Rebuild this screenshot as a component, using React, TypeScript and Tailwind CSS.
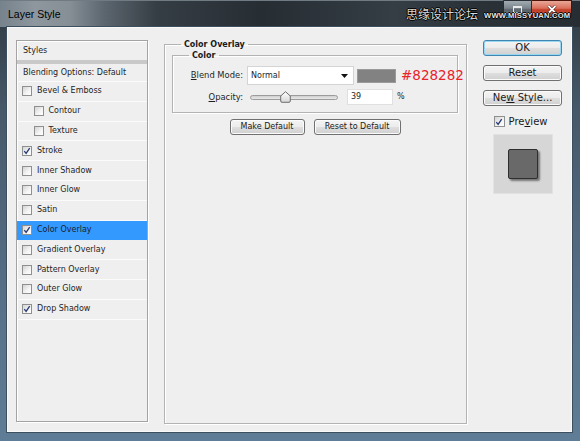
import React from 'react';

type Row = { label: string; checked?: boolean; indent?: boolean; selected?: boolean };

const rows: Row[] = [
  { label: 'Bevel & Emboss' },
  { label: 'Contour', indent: true },
  { label: 'Texture', indent: true },
  { label: 'Stroke', checked: true },
  { label: 'Inner Shadow' },
  { label: 'Inner Glow' },
  { label: 'Satin' },
  { label: 'Color Overlay', checked: true, selected: true },
  { label: 'Gradient Overlay' },
  { label: 'Pattern Overlay' },
  { label: 'Outer Glow' },
  { label: 'Drop Shadow', checked: true },
];

const CheckBox = ({ checked, big }: { checked?: boolean; big?: boolean }) => (
  <span
    className={`${big ? 'w-[11px] h-[11px]' : 'w-[10px] h-[10px]'} shrink-0 border border-[#8e8f8f] bg-[linear-gradient(135deg,#d4d4d4_0%,#f4f4f4_60%,#ffffff_100%)] flex items-center justify-center`}
  >
    {checked && (
      <svg width="8" height="8" viewBox="0 0 8 8">
        <path d="M1.3 4.2 L3.1 6.4 L6.7 1.2" fill="none" stroke="#253a75" strokeWidth="1.3" />
      </svg>
    )}
  </span>
);

const WinButton = ({ children, primary }: { children: React.ReactNode; primary?: boolean }) => (
  <button
    className={`w-[79px] h-[16px] rounded-[3px] border text-[10px] leading-none text-[#1a1a1a] flex items-center justify-center bg-[linear-gradient(180deg,#f4f4f4_0%,#ececec_48%,#dedede_52%,#d0d0d0_100%)] ${
      primary ? 'border-[#3f86b3] shadow-[inset_0_0_0_1px_#98d6f2]' : 'border-[#707070] shadow-[inset_0_0_0_1px_#fbfbfb]'
    }`}
  >
    {children}
  </button>
);

const SmallButton = ({ children, w }: { children: React.ReactNode; w: string }) => (
  <button
    className={`${w} h-[16px] rounded-[3px] border border-[#707070] shadow-[inset_0_0_0_1px_#fbfbfb] text-[8px] leading-none text-[#1a1a1a] flex items-center justify-center bg-[linear-gradient(180deg,#f4f4f4_0%,#ececec_48%,#dedede_52%,#d0d0d0_100%)]`}
  >
    {children}
  </button>
);

export default function App() {
  return (
    <div className="relative w-[580px] h-[441px] overflow-hidden flex flex-col font-['DejaVu_Sans',sans-serif] bg-[linear-gradient(180deg,#2f383f_0%,#46596a_25%,#57718a_70%,#5f7d96_100%)]">
      {/* title bar */}
      <div className="h-[27px] shrink-0 flex items-start justify-between bg-[linear-gradient(90deg,#76828c_0%,#8e979e_6%,#868f96_12%,#5c666e_18%,#363e45_27%,#262d33_45%,#353e45_68%,#2a3238_82%,#262d33_100%)] border-t border-[#6f7a83]">
        <span className="ml-[8px] mt-[7px] font-['Liberation_Sans',sans-serif] text-[10.5px] leading-[12px] text-black">
          Layer Style
        </span>
        <div className="flex mr-[8px] -mt-px">
          <div className="w-[29px] h-[18px] rounded-bl-[4px] border border-[#262c31] bg-[linear-gradient(180deg,#a2abb2_0%,#7a848c_45%,#5a636a_55%,#6d777f_100%)] flex items-center justify-center">
            <span className="w-[9px] h-[7px] border border-[#e8e8e8] border-t-2" />
          </div>
          <div className="w-[40px] h-[18px] rounded-br-[4px] border border-[#4c130b] border-l-0 bg-[linear-gradient(180deg,#e9a797_0%,#d9705c_45%,#c23d28_55%,#cf5b3f_100%)] flex items-center justify-center">
            <svg width="10" height="9" viewBox="0 0 10 9">
              <path d="M1.5 1 L8.5 8 M8.5 1 L1.5 8" stroke="#3a0d06" strokeWidth="3" />
              <path d="M1.5 1 L8.5 8 M8.5 1 L1.5 8" stroke="#ffffff" strokeWidth="1.8" />
            </svg>
          </div>
        </div>
      </div>

      {/* watermark */}
      <div className="absolute left-[406px] top-[6px] flex items-end gap-[6px] whitespace-nowrap pointer-events-none">
        <span className="font-['Noto_Sans_CJK_SC',sans-serif] text-[12px] leading-[16px] text-[#d8d8d8] [text-shadow:1px_0_0_#000,-1px_0_0_#000,0_1px_0_#000,0_-1px_0_#000]">
          思缘设计论坛
        </span>
        <span className="mb-[1px] font-['Liberation_Sans',sans-serif] font-bold text-[7.6px] tracking-[0.2px] leading-[10px] text-[#e6e6e6] [text-shadow:1px_0_0_#000,-1px_0_0_#000,0_1px_0_#000,0_-1px_0_#000]">
          WWW.MISSYUAN.COM
        </span>
      </div>

      {/* dialog content */}
      <div className="flex-1 ml-[7px] mr-[8px] mb-[9px] bg-[#efefef] border border-[#f9f9f9] shadow-[0_0_0_1px_#3d4f5e] flex items-start pt-[11px] pl-[8px]">
        {/* styles list */}
        <div className="mt-[1px] w-[132px] h-[382px] shrink-0 border border-[#a3a3a3] shadow-[inset_1px_1px_0_#ffffff,1px_1px_0_#ffffff] flex flex-col text-[8px] text-[#1e1e1e]">
          <div className="h-[19px] shrink-0 flex items-center pl-[6px]">Styles</div>
          <div className="h-[4px] shrink-0 bg-[#c9c9c9]" />
          <div className="h-[18px] shrink-0 flex items-center pl-[6px] border-b border-[#fbfbfb]">
            Blending Options: Default
          </div>
          {rows.map((r) => (
            <div
              key={r.label}
              className={`h-[19.8px] shrink-0 flex items-center border-b ${
                r.selected ? 'bg-[#3399ff] border-[#3399ff]' : 'border-[#fbfbfb]'
              } ${r.indent ? 'pl-[17px] gap-[4.5px]' : 'pl-[5px] gap-[5px]'}`}
            >
              <CheckBox checked={r.checked} />
              <span>{r.label}</span>
            </div>
          ))}
        </div>

        {/* color overlay group */}
        <fieldset className="ml-[16px] w-[303px] min-w-0 h-[385px] shrink-0 border border-[#b3b3b3] shadow-[inset_1px_1px_0_#ffffff,1px_1px_0_#ffffff] p-0">
          <legend className="ml-[16px] px-[3px] text-[8px] font-bold leading-[11px] text-[#1a1a1a]">Color Overlay</legend>
          <div className="pl-[7px] pr-[8px] flex flex-col">
            <fieldset className="min-w-0 border border-[#b3b3b3] shadow-[inset_1px_1px_0_#ffffff,1px_1px_0_#ffffff] p-0">
              <legend className="ml-[16px] px-[3px] text-[8px] font-bold leading-[11px] text-[#1a1a1a]">Color</legend>
              <div className="pt-[5px] pb-[7px] flex flex-col gap-[4px] text-[8.4px] text-[#1e1e1e]">
                <div className="h-[19px] flex items-center">
                  <span className="w-[70px] text-right shrink-0">
                    <span className="underline underline-offset-1">B</span>lend Mode:
                  </span>
                  <div className="ml-[4px] w-[107px] h-[19px] shrink-0 bg-white border border-[#d4d4d4] flex items-center justify-between pl-[3px] pr-[5px] text-[8px]">
                    <span>Normal</span>
                    <svg width="7" height="4" viewBox="0 0 7 4">
                      <path d="M0 0 H7 L3.5 4 Z" fill="#111" />
                    </svg>
                  </div>
                  <div className="ml-[3px] w-[39px] h-[14px] shrink-0 bg-[#828282] border border-[#9a9a9a]" />
                  <span className="ml-[5px] shrink-0 whitespace-nowrap text-[13.5px] leading-none text-[#e8232a]">#828282</span>
                </div>
                <div className="h-[16px] flex items-center">
                  <span className="w-[70px] text-right shrink-0">
                    <span className="underline underline-offset-1">O</span>pacity:
                  </span>
                  <div className="relative ml-[4px] w-[94px] h-[16px] shrink-0 flex items-center">
                    <div className="ml-[3px] w-[88px] h-[5px] rounded-full border border-[#9c9c9c] bg-[linear-gradient(180deg,#cfcfcf,#e9e9e9)]" />
                    <svg className="absolute left-[33px] top-[2px]" width="11" height="12" viewBox="0 0 11 12">
                      <path d="M5.5 0.7 L10.3 5 V10 Q10.3 11.3 9 11.3 H2 Q0.7 11.3 0.7 10 V5 Z" fill="url(#thumb)" stroke="#6e6e6e" strokeWidth="1" />
                      <defs>
                        <linearGradient id="thumb" x1="0" y1="0" x2="0" y2="1">
                          <stop offset="0" stopColor="#ffffff" />
                          <stop offset="1" stopColor="#d6d6d6" />
                        </linearGradient>
                      </defs>
                    </svg>
                  </div>
                  <div className="ml-[6px] w-[46px] h-[16px] shrink-0 bg-white border border-[#e0e0e0] flex items-center pl-[3px] text-[8px]">
                    39
                  </div>
                  <span className="ml-[4px] text-[8px]">%</span>
                </div>
              </div>
            </fieldset>
            <div className="mt-[6px] flex justify-center gap-[9px]">
              <SmallButton w="w-[75px]">Make Default</SmallButton>
              <SmallButton w="w-[87px]">Reset to Default</SmallButton>
            </div>
          </div>
        </fieldset>

        {/* right column */}
        <div className="ml-[16px] w-[79px] shrink-0 flex flex-col items-center">
          <div className="mt-[1px]">
            <WinButton primary>OK</WinButton>
          </div>
          <div className="mt-[9px]">
            <WinButton>Reset</WinButton>
          </div>
          <div className="mt-[9px]">
            <WinButton>
              Ne<span className="underline underline-offset-1">w</span>&nbsp;Style...
            </WinButton>
          </div>
          <div className="mt-[10px] h-[11px] flex items-center gap-[4px] text-[10px] text-[#1a1a1a] -ml-[4px]">
            <CheckBox checked big />
            <span>
              Pre<span className="underline underline-offset-1">v</span>iew
            </span>
          </div>
          <div className="mt-[7px] w-[60px] h-[60px] bg-[#d6d6d6] border border-[#e2e2e2] flex items-center justify-center">
            <div className="w-[30px] h-[30px] rounded-[2px] bg-[#696969] border border-[#2e2e2e] shadow-[2px_2px_2px_rgba(0,0,0,0.45)]" />
          </div>
        </div>
      </div>
    </div>
  );
}
